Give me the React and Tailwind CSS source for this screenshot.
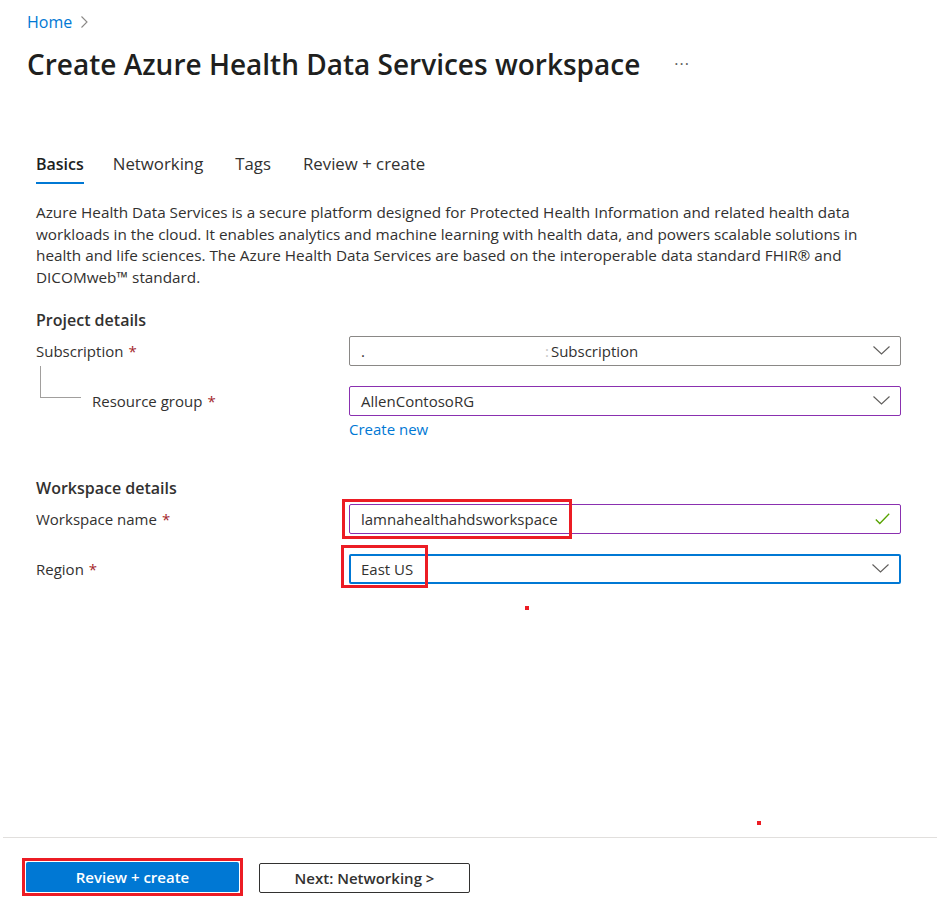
import React from 'react';

const font = { fontFamily: '"Open Sans", "Noto Sans", sans-serif' };

function Chevron() {
    return (
        <svg width="17" height="9" viewBox="0 0 17 9" className="shrink-0">
            <path d="M0.5 0.5 L8.5 8 L16.5 0.5" fill="none" stroke="#605e5c" strokeWidth="1.1" />
        </svg>
    );
}

function Required() {
    return <span className="text-[#a4262c] ml-[5px]">*</span>;
}

function SelectBox({ border, children }) {
    return (
        <div className={`h-[30px] w-[552px] flex items-center justify-between pl-[11px] pr-[10px] rounded-[2px] ${border}`}>
            <div className="flex items-center min-w-0">{children}</div>
            <Chevron />
        </div>
    );
}

export default function App() {
    return (
        <div className="relative w-[937px] h-[916px] bg-white text-[#323130] flex flex-col" style={font}>
            {/* header */}
            <div className="pl-[27px] pt-[12px]">
                <div className="flex items-center gap-[9px] text-[16px] leading-[20px]">
                    <span className="text-[#0078d4]">Home</span>
                    <svg width="7" height="12" viewBox="0 0 7 12">
                        <path d="M0.5 0.5 L6 6 L0.5 11.5" fill="none" stroke="#8a8886" strokeWidth="1.1" />
                    </svg>
                </div>
                <div className="mt-[14px] flex items-center">
                    <h1 className="text-[28px] leading-[36px] font-semibold text-[#201f1e]">
                        Create Azure Health Data Services workspace
                    </h1>
                    <span className="ml-[34px] text-[16px] text-[#605e5c] tracking-[1px]">···</span>
                </div>
            </div>

            {/* tabs */}
            <div className="pl-[36px] mt-[70px] flex gap-[30px] text-[16.8px] leading-[24px]">
                <div className="flex flex-col">
                    <span className="font-semibold text-[16px] text-[#201f1e]">Basics</span>
                    <span className="mt-[6px] h-[2px] bg-[#0078d4]" />
                </div>
                <span className="-ml-[1px]">Networking</span>
                <span className="ml-[2px]">Tags</span>
                <span className="ml-[2px]">Review + create</span>
            </div>

            {/* body */}
            <div className="pl-[36px] pr-[30px] mt-[18px]">
                <p className="text-[15.3px] leading-[21.7px]">
                    Azure Health Data Services is a secure platform designed for Protected Health Information and related health data<br />
                    workloads in the cloud. It enables analytics and machine learning with health data, and powers scalable solutions in<br />
                    health and life sciences. The Azure Health Data Services are based on the interoperable data standard FHIR® and<br />
                    DICOMweb™ standard.
                </p>

                <h2 className="mt-[20px] text-[16px] leading-[22px] font-semibold">Project details</h2>

                <div className="mt-[5px] flex items-center">
                    <div className="w-[313px] text-[15px] pt-[1px]">
                        Subscription<Required />
                    </div>
                    <SelectBox border="border border-[#8a8886]">
                        <span className="text-[15px]">.</span>
                        <span className="ml-[180px] text-[15px] text-[#c8c6c4]">:</span>
                        <span className="ml-[2px] text-[15px]">Subscription</span>
                    </SelectBox>
                </div>

                <div className="flex">
                    <div className="w-[313px] flex">
                        <div className="ml-[4px] w-[41px] h-[32px] border-l border-b border-[#a19f9d]" />
                    </div>
                </div>

                <div className="-mt-[12px] flex items-center">
                    <div className="w-[313px] pl-[56px] text-[15px] pt-[1px]">
                        Resource group<Required />
                    </div>
                    <SelectBox border="border border-[#8a30b0]">
                        <span className="text-[15px]">AllenContosoRG</span>
                    </SelectBox>
                </div>
                <div className="flex">
                    <div className="w-[313px]" />
                    <span className="mt-[3px] text-[15px] leading-[20px] text-[#0078d4]">Create new</span>
                </div>

                <h2 className="mt-[38px] text-[16px] leading-[22px] font-semibold">Workspace details</h2>

                <div className="mt-[5px] flex items-center">
                    <div className="w-[313px] text-[15px] pt-[1px]">
                        Workspace name<Required />
                    </div>
                    <div className="relative">
                        <div className="h-[30px] w-[552px] flex items-center justify-between pl-[11px] pr-[10px] rounded-[2px] border border-[#8a30b0]">
                            <span className="text-[15px]">lamnahealthahdsworkspace</span>
                            <svg width="15" height="12" viewBox="0 0 15 12">
                                <path d="M0.8 6.5 L4.8 10.5 L14.2 0.8" fill="none" stroke="#57a300" strokeWidth="1.3" />
                            </svg>
                        </div>
                        <div className="absolute left-[-7px] top-[-5px] w-[230px] h-[40px] border-[3px] border-[#ec1c24]" />
                    </div>
                </div>

                <div className="mt-[20px] flex items-center">
                    <div className="w-[313px] text-[15px] pt-[1px]">
                        Region<Required />
                    </div>
                    <div className="relative">
                        <SelectBox border="border-2 border-[#0078d4]">
                            <span className="text-[15px] -ml-[1px]">East US</span>
                        </SelectBox>
                        <div className="absolute left-[-8px] top-[-9px] w-[87px] h-[43px] border-[3px] border-[#ec1c24]" />
                    </div>
                </div>
            </div>

            <div className="flex-1" />

            {/* footer */}
            <div className="ml-[3px] border-t border-[#e1dfdd] h-[79px] flex items-start pt-[20px] pl-[19px]">
                <div className="border-[3px] border-[#ec1c24] p-[1px]">
                    <button className="w-[213px] h-[30px] bg-[#0078d4] text-white text-[15px] font-semibold rounded-[2px]">
                        Review + create
                    </button>
                </div>
                <button className="ml-[16px] mt-[5px] w-[211px] h-[30px] bg-white border border-[#323130] text-[15px] font-semibold rounded-[2px]">
                    Next: Networking &gt;
                </button>
            </div>

            {/* stray annotation marks */}
            <span className="absolute left-[525px] top-[606px] w-[4px] h-[4px] bg-[#ec1c24]" />
            <span className="absolute left-[757px] top-[821px] w-[4px] h-[4px] bg-[#ec1c24]" />
        </div>
    );
}
